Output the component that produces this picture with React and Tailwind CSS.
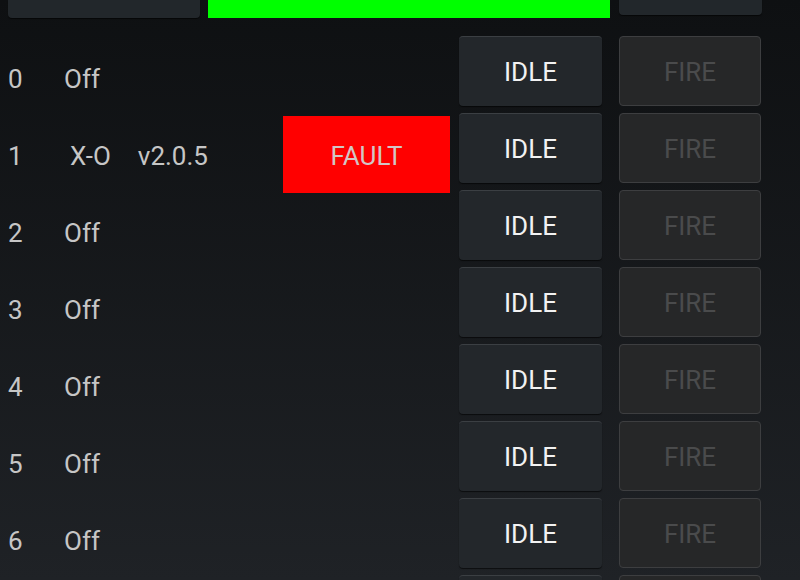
const rows = [
  { id: 0, label: "Off" },
  { id: 1, label: "X-O", version: "v2.0.5", fault: true },
  { id: 2, label: "Off" },
  { id: 3, label: "Off" },
  { id: 4, label: "Off" },
  { id: 5, label: "Off" },
  { id: 6, label: "Off" },
];

function Row({ row, blank }) {
  return (
    <div className="flex h-[77px] shrink-0">
      <div className="flex w-[450px] items-center text-[26px] text-[#c6c6c6]">
        {!blank && (
          <>
            <span className="mt-[4px] w-[64px] pl-[8px]">{row.id}</span>
            <span className={"mt-[4px] " + (row.fault ? "ml-[6px]" : "")}>{row.label}</span>
            {row.version && <span className="ml-[27px] mt-[4px]">{row.version}</span>}
            {row.fault && (
              <div className="ml-auto flex h-full w-[167px] items-center justify-center bg-[#ff0000] pt-[3px] text-[#d2c6c6]">
                FAULT
              </div>
            )}
          </>
        )}
      </div>
      <button className="ml-[9px] mt-[-3px] h-[70px] w-[143px] rounded-[4px] border-t border-[#3b3f43] bg-[#23272b] pt-[2px] text-[26px] text-[#f2f2f2] shadow-[0_1px_1px_rgba(0,0,0,0.6)]">
        {!blank && "IDLE"}
      </button>
      <button className="ml-[17px] mt-[-3px] h-[70px] w-[142px] rounded-[4px] border border-[#3d3e40] bg-[#262728] pt-[2px] text-[26px] text-[#4a4b4c]">
        {!blank && "FIRE"}
      </button>
    </div>
  );
}

export default function App() {
  return (
    <div
      className="flex h-[580px] w-[800px] flex-col overflow-hidden bg-gradient-to-b from-[#0e1012] to-[#1f2226]"
      style={{ fontFamily: "Roboto, 'Noto Sans', sans-serif" }}
    >
      <div className="flex h-[39px] shrink-0 items-start">
        <div className="ml-[8px] h-[18px] w-[192px] rounded-b-[4px] bg-[#22272b] shadow-[0_1px_1px_rgba(0,0,0,0.6)]" />
        <div className="ml-[8px] h-[18px] w-[402px] bg-[#00ff00]" />
        <div className="ml-[9px] h-[15px] w-[143px] rounded-b-[4px] bg-[#22272b] shadow-[0_1px_1px_rgba(0,0,0,0.6)]" />
      </div>
      {rows.map((r) => (
        <Row key={r.id} row={r} />
      ))}
      <Row row={{ id: 7 }} blank />
    </div>
  );
}
